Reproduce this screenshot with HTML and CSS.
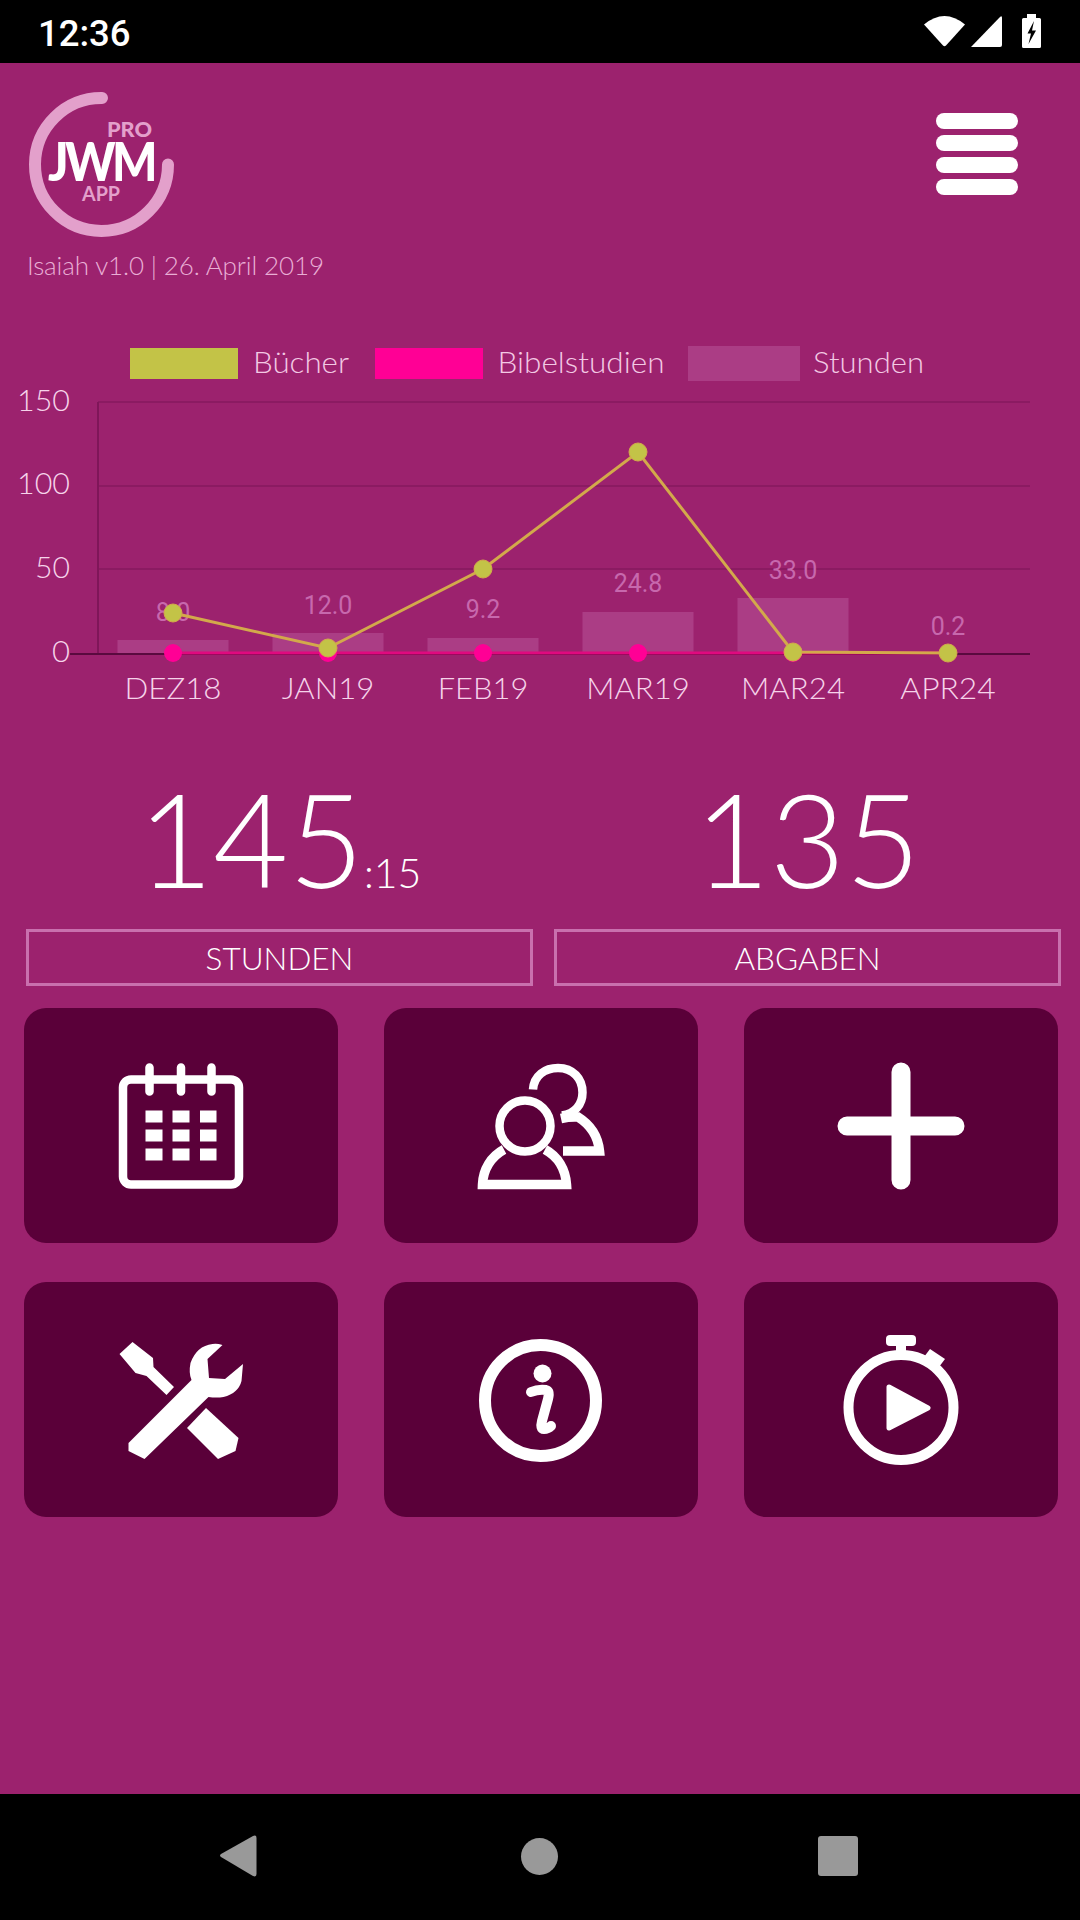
FILE: index.html
```html
<!DOCTYPE html>
<html lang="de">
<head>
<meta charset="utf-8">
<title>JWM App Pro</title>
<link rel="stylesheet" href="styles.css">
</head>
<body>
<div class="phone">
  <div class="statusbar">
    <span class="clock">12:36</span>
    <div class="status-icons">
      <svg class="st-wifi" viewBox="924 14 42 32"><path d="M924 23.500Q944.500 6.500 965 23.500L946 44.500Q944.500 46 943 44.500Z"/></svg>
      <svg class="st-signal" viewBox="971 16 31 31"><path d="M971 47L1000 17Q1002 15 1002 18V45Q1002 47 1000 47Z"/></svg>
      <svg class="st-batt" viewBox="1022 14 19 34"><path class="batt" d="M1027 14H1036V18H1039.500Q1041 18 1041 19.500V46.500Q1041 48 1039.500 48H1023.500Q1022 48 1022 46.500V19.500Q1022 18 1023.500 18H1027Z"/><path class="bolt" d="M1034 21L1027.500 33.500H1031L1028.500 44L1036 30.500H1032Z"/></svg>
    </div>
  </div>

  <main class="app">
    <header class="top">
      <div class="brand">
        <svg class="logo" viewBox="26 89 150 150">
          <path class="logo-ring" d="M168 164.500A66.500 66.500 0 1 1 102 98"/>
          <text class="logo-pro" x="107" y="137" textLength="45" lengthAdjust="spacingAndGlyphs">PRO</text>
          <text class="logo-jwm" x="48" y="181" textLength="106" lengthAdjust="spacingAndGlyphs">JWM</text>
          <text class="logo-app" x="82" y="201" textLength="38" lengthAdjust="spacingAndGlyphs">APP</text>
        </svg>
        <p class="version">Isaiah v1.0 | 26. April 2019</p>
      </div>
      <div class="menu"><span></span><span></span><span></span><span></span></div>
    </header>

    <svg class="chart" viewBox="0 340 1080 380">
      <rect class="sw-books" x="130" y="348" width="108" height="31"/>
      <text class="legend" x="253" y="373" textLength="96" lengthAdjust="spacingAndGlyphs">Bücher</text>
      <rect class="sw-studies" x="375" y="348" width="108" height="31"/>
      <text class="legend" x="497.500" y="373" textLength="167" lengthAdjust="spacingAndGlyphs">Bibelstudien</text>
      <rect class="bar" x="688" y="346" width="112" height="35"/>
      <text class="legend" x="813" y="373" textLength="111" lengthAdjust="spacingAndGlyphs">Stunden</text>

      <path class="grid" d="M98 402H1030M98 486H1030M98 569H1030"/>
      <path class="yaxis" d="M98 402V654"/>
      <path class="axis" d="M70 654H1030"/>
      <text class="ytick" x="17" y="411" textLength="53" lengthAdjust="spacingAndGlyphs">150</text>
      <text class="ytick" x="17" y="494" textLength="53" lengthAdjust="spacingAndGlyphs">100</text>
      <text class="ytick" x="35" y="578" textLength="35" lengthAdjust="spacingAndGlyphs">50</text>
      <text class="ytick" x="52" y="662" textLength="18" lengthAdjust="spacingAndGlyphs">0</text>

      <rect class="bar" x="117.500" y="640" width="111" height="13"/>
      <rect class="bar" x="272.500" y="633" width="111" height="20"/>
      <rect class="bar" x="427.500" y="638" width="111" height="15"/>
      <rect class="bar" x="582.500" y="612" width="111" height="41"/>
      <rect class="bar" x="737.500" y="598" width="111" height="55"/>

      <text class="val" x="173" y="621">8.0</text>
      <text class="val" x="328" y="614">12.0</text>
      <text class="val" x="483" y="618">9.2</text>
      <text class="val" x="638" y="592">24.8</text>
      <text class="val" x="793" y="579">33.0</text>
      <text class="val" x="948" y="635">0.2</text>

      <path class="line-studies" d="M173 653H948"/>
      <circle class="dot-studies" cx="173" cy="653" r="9"/>
      <circle class="dot-studies" cx="328" cy="653" r="9"/>
      <circle class="dot-studies" cx="483" cy="653" r="9"/>
      <circle class="dot-studies" cx="638" cy="653" r="9"/>
      <circle class="dot-studies" cx="793" cy="653" r="9"/>

      <path class="line-books" d="M173 613L328 648L483 569L638 452L793 652L948 653"/>
      <circle class="dot-books" cx="173" cy="613" r="9"/>
      <circle class="dot-books" cx="328" cy="648" r="9"/>
      <circle class="dot-books" cx="483" cy="569" r="9"/>
      <circle class="dot-books" cx="638" cy="452" r="9"/>
      <circle class="dot-books" cx="793" cy="652" r="9"/>
      <circle class="dot-books" cx="948" cy="653" r="9"/>

      <text class="xtick" x="124.500" y="699" textLength="97" lengthAdjust="spacingAndGlyphs">DEZ18</text>
      <text class="xtick" x="281.700" y="699" textLength="92.600" lengthAdjust="spacingAndGlyphs">JAN19</text>
      <text class="xtick" x="437.700" y="699" textLength="90.600" lengthAdjust="spacingAndGlyphs">FEB19</text>
      <text class="xtick" x="586.200" y="699" textLength="103.600" lengthAdjust="spacingAndGlyphs">MAR19</text>
      <text class="xtick" x="741" y="699" textLength="104" lengthAdjust="spacingAndGlyphs">MAR24</text>
      <text class="xtick" x="900.300" y="699" textLength="95.400" lengthAdjust="spacingAndGlyphs">APR24</text>
    </svg>

    <section class="stats">
      <div class="stat">
        <div class="stat-num">145<small>:15</small></div>
        <div class="stat-label">STUNDEN</div>
      </div>
      <div class="stat">
        <div class="stat-num">135</div>
        <div class="stat-label">ABGABEN</div>
      </div>
    </section>

    <section class="tiles">
      <button class="tile">
        <svg class="ico" viewBox="115.500 1060.500 130 130">
          <rect class="ln" x="122.500" y="1079" width="116" height="105" rx="8"/>
          <path class="ln rnd" d="M149 1067V1091M180.500 1067V1091M211 1067V1091"/>
          <path class="fl" d="M145 1110h17v12h-17zM172 1110h17v12h-17zM199.500 1110h16.500v12h-16.500zM145 1129h17v12h-17zM172 1129h17v12h-17zM199.500 1129h16.500v12h-16.500zM145 1148h17v12h-17zM172 1148h17v12h-17zM199.500 1148h16.500v12h-16.500z"/>
        </svg>
      </button>
      <button class="tile">
        <svg class="ico" viewBox="476 1060.500 130 130">
          <ellipse class="ln" cx="525" cy="1125.500" rx="25.500" ry="25.500"/>
          <path class="ln heavy" d="M504 1149C491 1156 483 1169 482.500 1184H566.500C565.500 1169 558 1156 545 1149"/>
          <path class="ln" d="M533 1089C534 1075 545 1067.500 558 1067.500C573 1067.500 582.500 1078 582.500 1092C582.500 1104 575 1113 562 1115"/>
          <path class="ln heavy" d="M561 1118Q570 1116 578 1116.500C590 1124 598 1136 599.500 1150.500H563"/>
        </svg>
      </button>
      <button class="tile">
        <svg class="ico" viewBox="836.500 1060.500 130 130">
          <path class="plus" d="M901.500 1071.500V1179.500M847.500 1125.500H955.500"/>
        </svg>
      </button>
      <button class="tile">
        <svg class="ico" viewBox="115.500 1334 130 130">
          <path class="fl" d="M132 1341L119 1353L135 1372L146 1375L166 1394L173.500 1386L153 1366L152.500 1357Z"/>
          <path class="fl" d="M205.500 1407L238 1437L235 1450L217.500 1458L186.500 1427Z"/>
          <path class="fl" d="M128 1442V1450L144 1458L208 1396Q216 1397 223 1396Q238 1392 241 1380L242.500 1363L224.500 1378L208.500 1377L207 1358L222 1344Q216 1342 212 1343Q196 1345 190 1362Q188 1372 191 1379Z"/>
        </svg>
      </button>
      <button class="tile">
        <svg class="ico" viewBox="476 1334 130 130">
          <circle class="ln thick" cx="540.500" cy="1399.500" r="55.500"/>
          <circle class="fl" cx="542.500" cy="1372.500" r="9"/>
          <path class="info-i" d="M531 1391Q538 1388 546 1389Q550 1390 548 1398L542 1420Q540 1428 544 1428Q548 1428 551 1425"/>
        </svg>
      </button>
      <button class="tile">
        <svg class="ico" viewBox="836 1334 130 130">
          <circle class="ln thick2" cx="901" cy="1406.500" r="52.500"/>
          <rect class="fl" x="886" y="1334" width="30" height="11" rx="4"/>
          <rect class="fl" x="896" y="1343" width="10" height="9"/>
          <path class="fl" d="M930 1348L945 1358L939 1366L924 1356Z"/>
          <path class="play" d="M889 1386L928 1407L889 1427Z"/>
        </svg>
      </button>
    </section>
  </main>

  <nav class="navbar">
    <svg class="nav-back" viewBox="220 1836 37 42"><path d="M221 1855L253 1837Q256.500 1835.500 256.500 1839V1875Q256.500 1878.500 253 1877L221 1858Q219 1856.500 221 1855Z"/></svg>
    <span class="nav-home"></span>
    <span class="nav-recent"></span>
  </nav>
</div>
</body>
</html>
```
FILE: styles.css
```css
* { box-sizing: border-box; }
html, body { margin: 0; padding: 0; }
body { background: #000; font-family: "Lato", "Liberation Sans", sans-serif; }

.phone { width: 1080px; height: 1920px; display: flex; flex-direction: column; }

/* Status bar */
.statusbar {
  height: 63px; background: #000; color: #fff;
  display: flex; align-items: center; justify-content: space-between;
  padding: 0 39px 0 38px;
}
.clock { font: 500 36.500px/1 "Roboto", sans-serif; margin-top: 5px; }
.status-icons { display: flex; align-items: center; fill: #fff; margin-top: -1px; }
.st-wifi { width: 42px; height: 32px; }
.st-signal { width: 31px; height: 31px; margin-left: 5px; margin-top: 1px; }
.st-batt { width: 19px; height: 34px; margin-left: 20px; }
.batt { fill: #fff; }
.bolt { fill: #000; }

/* App surface */
.app { flex: 1; background: #9c226e; display: flex; flex-direction: column; }

.top { display: flex; justify-content: space-between; align-items: flex-start; padding: 26px 62px 0 26px; }
.logo { display: block; width: 150px; height: 150px; }
.logo-ring { fill: none; stroke: #e3a0cb; stroke-width: 12; stroke-linecap: round; }
.logo-pro { font: 900 20px "Lato", sans-serif; fill: #e3a0cb; }
.logo-jwm { font: 900 53px "Lato", sans-serif; letter-spacing: -4px; fill: #fff; }
.logo-app { font: 700 20px "Lato", sans-serif; fill: #e3a0cb; }
.version { margin: 11px 0 0 1px; font-size: 26px; line-height: 30px; font-weight: 300; letter-spacing: -0.130px; color: #e9aed5; }

.menu { display: flex; flex-direction: column; gap: 6px; width: 82px; margin-top: 24px; }
.menu span { display: block; height: 16px; border-radius: 8px; background: #fff; }

/* Chart */
.chart { display: block; width: 1080px; height: 380px; margin-top: 60px; }
.sw-books { fill: #c3c347; }
.sw-studies { fill: #ff0095; }
.bar { fill: #ab3d85; }
.legend { font-size: 29px; font-weight: 300; fill: #f3c9e4; }
.grid { fill: none; stroke: #8b1b62; stroke-width: 2; }
.yaxis { fill: none; stroke: #7f1659; stroke-width: 2; }
.axis { fill: none; stroke: #5a0a3f; stroke-width: 2; }
.ytick { font-size: 29px; font-weight: 300; fill: #f6d3ea; }
.xtick { font-size: 29px; font-weight: 300; fill: #f6d3ea; }
.val { font: 400 25px "Roboto", sans-serif; fill: #c768ad; text-anchor: middle; }
.line-studies { fill: none; stroke: #e0097f; stroke-width: 3; }
.dot-studies { fill: #ff0095; }
.line-books { fill: none; stroke: #d3a94b; stroke-width: 3; }
.dot-books { fill: #c3c347; stroke: #d3a94b; stroke-width: 1; }

/* Totals */
.stats { display: grid; grid-template-columns: 507px 507px; gap: 21px; padding: 0 0 0 26px; margin-top: 53px; }
.stat { display: flex; flex-direction: column; }
.stat-num { text-align: center; font-size: 130px; line-height: 130px; font-weight: 300; color: #fff; white-space: nowrap; }
.stat-num small { font-size: 41px; font-weight: 300; line-height: 1; }
.stat-label {
  margin-top: 26px; height: 57px; border: 3px solid #c970ae;
  display: flex; align-items: center; justify-content: center;
  font-size: 31.500px; font-weight: 300; color: #fff;
}

/* Tiles */
.tiles {
  display: grid; grid-template-columns: repeat(3, 314px); grid-auto-rows: 235px;
  column-gap: 46px; row-gap: 39px; padding-left: 23.500px; margin-top: 22px;
}
.tile {
  display: flex; align-items: center; justify-content: center;
  padding: 0; border: 0; border-radius: 22px; background: #5a0039;
}
.ico { display: block; width: 130px; height: 130px; overflow: visible; }
.ln { fill: none; stroke: #fff; stroke-width: 8.500; }
.heavy { stroke-width: 9.500; }
.rnd { stroke-linecap: round; }
.thick { stroke-width: 12; }
.thick2 { stroke-width: 10; }
.fl { fill: #fff; }
.plus { fill: none; stroke: #fff; stroke-width: 19; stroke-linecap: round; }
.info-i { fill: none; stroke: #fff; stroke-width: 10; stroke-linecap: round; stroke-linejoin: round; }
.play { fill: #fff; stroke: #fff; stroke-width: 5; stroke-linejoin: round; }

/* Android navigation */
.navbar {
  height: 126px; background: #000; flex: none;
  display: flex; align-items: center; justify-content: space-between;
  padding: 0 222px 2px 220px;
}
.nav-back { width: 37px; height: 42px; fill: #999; }
.nav-home { width: 37px; height: 37px; border-radius: 50%; background: #999; margin-left: 4px; }
.nav-recent { width: 40px; height: 40px; border-radius: 3px; background: #999; }
```
